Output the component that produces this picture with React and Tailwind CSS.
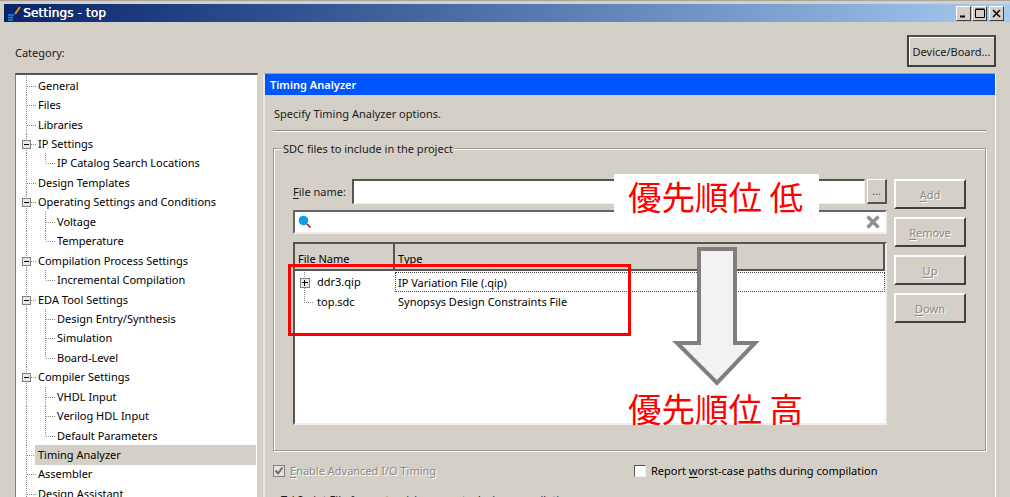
const FONT = '"Noto Sans", "Open Sans", sans-serif';
const tree = [
  ['General', 0], ['Files', 0], ['Libraries', 0], ['IP Settings', 0, 'm'],
  ['IP Catalog Search Locations', 1, 'l'], ['Design Templates', 0],
  ['Operating Settings and Conditions', 0, 'm'], ['Voltage', 1], ['Temperature', 1, 'l'],
  ['Compilation Process Settings', 0, 'm'], ['Incremental Compilation', 1, 'l'],
  ['EDA Tool Settings', 0, 'm'], ['Design Entry/Synthesis', 1], ['Simulation', 1], ['Board-Level', 1, 'l'],
  ['Compiler Settings', 0, 'm'], ['VHDL Input', 1], ['Verilog HDL Input', 1], ['Default Parameters', 1, 'l'],
  ['Timing Analyzer', 0, 's'], ['Assembler', 0], ['Design Assistant', 0],
];

function Connector({ level, kind }) {
  const w = level ? 41 : 22;
  const dot = { stroke: '#8a8a8a', strokeWidth: 1, strokeDasharray: '1 1', fill: 'none' };
  return (
    <svg width={w} height="20" className="shrink-0" shapeRendering="crispEdges">
      <path d="M10.5 0V20" style={dot} />
      {level ? (
        <>
          <path d={kind === 'l' ? 'M29.5 0V10' : 'M29.5 0V20'} style={dot} />
          <path d="M30 10.5H39" style={dot} />
        </>
      ) : (
        <path d="M11 10.5H20" style={dot} />
      )}
      {kind === 'm' && (
        <>
          <rect x="6.5" y="6.5" width="8" height="8" fill="#e8e8e8" stroke="#808080" />
          <path d="M8 10.5H13" stroke="#000" />
        </>
      )}
    </svg>
  );
}

function Win98Button({ children }) {
  return (
    <div className="h-[30px] pt-[2px] flex items-center justify-center bg-[#d4d0c8] border-t-2 border-l-2 border-t-white border-l-white border-b-2 border-r-2 border-b-[#404040] border-r-[#404040] text-[#8c8a85] [text-shadow:1px_1px_0_#fff]">
      {children}
    </div>
  );
}

function WinCtl({ children }) {
  return (
    <div className="w-[15px] h-[15px] flex items-center justify-center bg-[#d4d0c8] border-t border-l border-t-white border-l-white border-b border-r border-b-[#404040] border-r-[#404040]">
      {children}
    </div>
  );
}

const U = ({ children }) => <span className="underline underline-offset-2">{children}</span>;

export default function App() {
  return (
    <div className="relative w-[1010px] h-[497px] overflow-hidden bg-[#d4d0c8] text-[11px] leading-[16px] text-[#1a1a1a] border-t border-t-[#a8a69f] pt-[3px] pl-[4px]" style={{ fontFamily: FONT }}>
      {/* title bar */}
      <div className="h-[18px] flex items-center justify-between bg-gradient-to-r from-[#0a246a] to-[#a6caf0] pr-[6px]">
        <div className="flex items-center gap-[2px] pl-[3px]">
          <svg width="14" height="16" viewBox="0 0 14 16">
            <path d="M8 9L13 2" stroke="#f08a1c" strokeWidth="2" />
            <path d="M1 10H7M1 12.5H6M1 15H6" stroke="#1f8fd8" strokeWidth="1.6" />
          </svg>
          <span className="text-[12px] text-white tracking-[0.15px] [text-shadow:0.4px_0_0_#fff]" style={{ fontFamily: '"DejaVu Sans", sans-serif' }}>Settings - top</span>
        </div>
        <div className="flex items-center gap-[1px]">
          <WinCtl><svg width="9" height="9"><path d="M1 7.5H6" stroke="#000" strokeWidth="2" /></svg></WinCtl>
          <WinCtl><svg width="10" height="10"><path d="M0.5 1.5H9.5V9.5H0.5Z M0.5 1H9.5" stroke="#000" fill="none" /></svg></WinCtl>
          <div className="ml-[1px]"><WinCtl><svg width="9" height="9"><path d="M1 1L8 8M8 1L1 8" stroke="#000" strokeWidth="1.5" /></svg></WinCtl></div>
        </div>
      </div>

      {/* category row */}
      <div className="flex items-center justify-between h-[32px] mt-[13px] pl-[11px] pr-[14px]">
        <span className="mt-[3px]">Category:</span>
        <div className="w-[89px] h-[32px] pt-[1px] flex items-center justify-center border-2 border-[#404040] border-t-[#505050] bg-[#d4d0c8] shadow-[inset_1px_1px_0_#fff]">Device/Board...</div>
      </div>

      {/* main */}
      <div className="flex mt-[6px] pl-[11px]">
        <div className="w-[243px] h-[430px] pt-[1px] bg-white border-t-2 border-l border-r border-t-[#555] border-l-[#808080] border-r-[#d4d0c8] overflow-hidden shrink-0">
          {tree.map(([label, level, kind]) => (
            <div key={label} className="h-[19.45px] flex items-center text-black">
              <Connector level={level} kind={kind} />
              <span className={kind === 's' ? 'flex-1 bg-[#d4d0c8] h-[20px] leading-[20px] pl-[3px] ml-[-3px] mr-[1px]' : ''}>{label}</span>
            </div>
          ))}
        </div>

        <div className="ml-[5px] w-[733px] h-[430px] border-t border-t-[#a0a0a0] border-l-2 border-l-[#e8e6e0] border-r border-r-white">
          <div className="h-[21px] bg-[#0055ff] text-white font-semibold leading-[21px] pl-[5px]">Timing Analyzer</div>
          <div className="pl-[8px] pr-[9px]">
            <div className="mt-[11px] h-[24px] ml-[1px]">Specify Timing Analyzer options.</div>
            <div className="border-t border-t-[#8c8a85] border-b border-b-white h-[2px]" />
            <div className="relative mt-[16px] h-[303px] border border-[#9a9892] shadow-[1px_1px_0_#fff,inset_1px_1px_0_#fff] pt-[30px] pl-[19px]">
              <span className="absolute left-[8px] -top-[7px] bg-[#d4d0c8] px-[1px] leading-[14px]">SDC files to include in the project</span>
              <div className="flex gap-[7px]">
                <div className="w-[594px]">
                  <div className="flex items-center h-[25px]">
                    <span className="w-[59px] shrink-0"><U>F</U>ile name:</span>
                    <div className="w-[513px] h-[25px] bg-white border-t-2 border-l-2 border-t-[#555] border-l-[#555] border-b border-r border-b-[#eee] border-r-[#eee]" />
                    <div className="w-[20px] h-[25px] ml-[2px] flex items-center justify-center border-b-2 border-r-2 border-b-[#555] border-r-[#555] border-t border-l border-t-white border-l-white text-[#555]">...</div>
                  </div>
                  <div className="mt-[6px] h-[24px] bg-white border-t-2 border-l-2 border-t-[#666] border-l-[#666] border-r-2 border-b-2 border-r-[#eee] border-b-[#eee] flex items-center justify-between px-[3px]">
                    <svg width="14" height="14" viewBox="0 0 14 14">
                      <circle cx="5.5" cy="5.5" r="4.8" fill="#0aa0ea" />
                      <path d="M9 9L12.5 12.5" stroke="#a01020" strokeWidth="1.6" />
                    </svg>
                    <svg width="16" height="16" viewBox="0 0 16 16" className="mr-[1px]">
                      <path d="M2.5 2.5L13.5 13.5M13.5 2.5L2.5 13.5" stroke="#8e8e8e" strokeWidth="3.4" />
                    </svg>
                  </div>
                  <div className="mt-[8px] h-[183px] bg-white border-t-2 border-l-2 border-t-[#555] border-l-[#555] border-r-2 border-b-2 border-r-[#eee] border-b-[#eee] text-black">
                    <div className="flex h-[27px] bg-[#d4d0c8] border-b-2 border-b-[#555] border-r-2 border-r-[#555]">
                      <div className="w-[100px] pl-[3px] pt-[7px] border-r-2 border-r-[#555]">File Name</div>
                      <div className="flex-1 pl-[3px] pt-[7px]">Type</div>
                    </div>
                    <div className="flex h-[20px] mt-[1px] items-center">
                      <svg width="21" height="20" className="shrink-0 ml-[1px]" shapeRendering="crispEdges">
                        <path d="M8.5 0V20" stroke="#8a8a8a" strokeDasharray="1 1" />
                        <rect x="4.5" y="6.5" width="9" height="9" fill="#e8e8e8" stroke="#808080" />
                        <path d="M6 10.5H12M8.5 8V14" stroke="#000" />
                      </svg>
                      <span className="w-[78px] shrink-0">ddr3.qip</span>
                      <span className="flex-1 h-[20px] leading-[19px] pl-[2px] border border-dotted border-[#444]">IP Variation File (.qip)</span>
                    </div>
                    <div className="flex h-[20px] items-center">
                      <svg width="21" height="20" className="shrink-0 ml-[1px]" shapeRendering="crispEdges">
                        <path d="M8.5 0V10.5H18" stroke="#8a8a8a" strokeDasharray="1 1" fill="none" />
                      </svg>
                      <span className="w-[78px] shrink-0">top.sdc</span>
                      <span className="pl-[3px]">Synopsys Design Constraints File</span>
                    </div>
                  </div>
                </div>
                <div className="w-[72px] flex flex-col gap-[8px]">
                  <Win98Button><span><U>A</U>dd</span></Win98Button>
                  <Win98Button><span><U>R</U>emove</span></Win98Button>
                  <Win98Button><span><U>U</U>p</span></Win98Button>
                  <Win98Button><span><U>D</U>own</span></Win98Button>
                </div>
              </div>
            </div>

            <div className="flex items-center mt-[11px] h-[18px]">
              <div className="w-[347px] flex items-center gap-[5px] text-[#8c8a85] [text-shadow:1px_1px_0_#fff]">
                <svg width="12" height="12" className="shrink-0"><rect x="0.5" y="0.5" width="11" height="11" fill="#e4e2dc" stroke="#808080" /><path d="M2.5 5.5L5 8.5L9.5 2.5" stroke="#6a6a6a" strokeWidth="2" fill="none" /></svg>
                <span><U>E</U>nable Advanced I/O Timing</span>
              </div>
              <div className="ml-[14px] flex items-center gap-[5px] text-black">
                <div className="w-[12px] h-[12px] bg-white border-t border-l border-t-[#555] border-l-[#555] border-r border-b border-r-[#eee] border-b-[#eee]" />
                <span>Report <U>w</U>orst-case paths during compilation</span>
              </div>
            </div>
            <div className="mt-[12px] pl-[8px] text-[#1a1a1a]">Tcl Script File for customizing reports during compilation</div>
          </div>
        </div>
      </div>

      {/* annotations overlaying the screenshot */}
      <div className="absolute left-[288px] top-[263px] w-[343px] h-[72px] border-[3px] border-[#ff0000]" />
      <div className="absolute left-[614px] top-[173px] w-[205px] h-[41px] bg-white text-[#ff0000] text-[33.5px] leading-[44px] pl-[14px] whitespace-nowrap" style={{ fontFamily: '"Noto Sans CJK JP", sans-serif' }}>優先順位 低</div>
      <div className="absolute left-[628px] top-[386px] text-[#ff0000] text-[33.5px] leading-[41px] whitespace-nowrap" style={{ fontFamily: '"Noto Sans CJK JP", sans-serif' }}>優先順位 高</div>
      <svg className="absolute left-[672px] top-[244px]" width="88" height="144" viewBox="0 0 88 144">
        <path d="M27 4H63V98H83L45 138L5 98H27Z" fill="#f2f2f2" stroke="#7f7f7f" strokeWidth="4" />
      </svg>
    </div>
  );
}
